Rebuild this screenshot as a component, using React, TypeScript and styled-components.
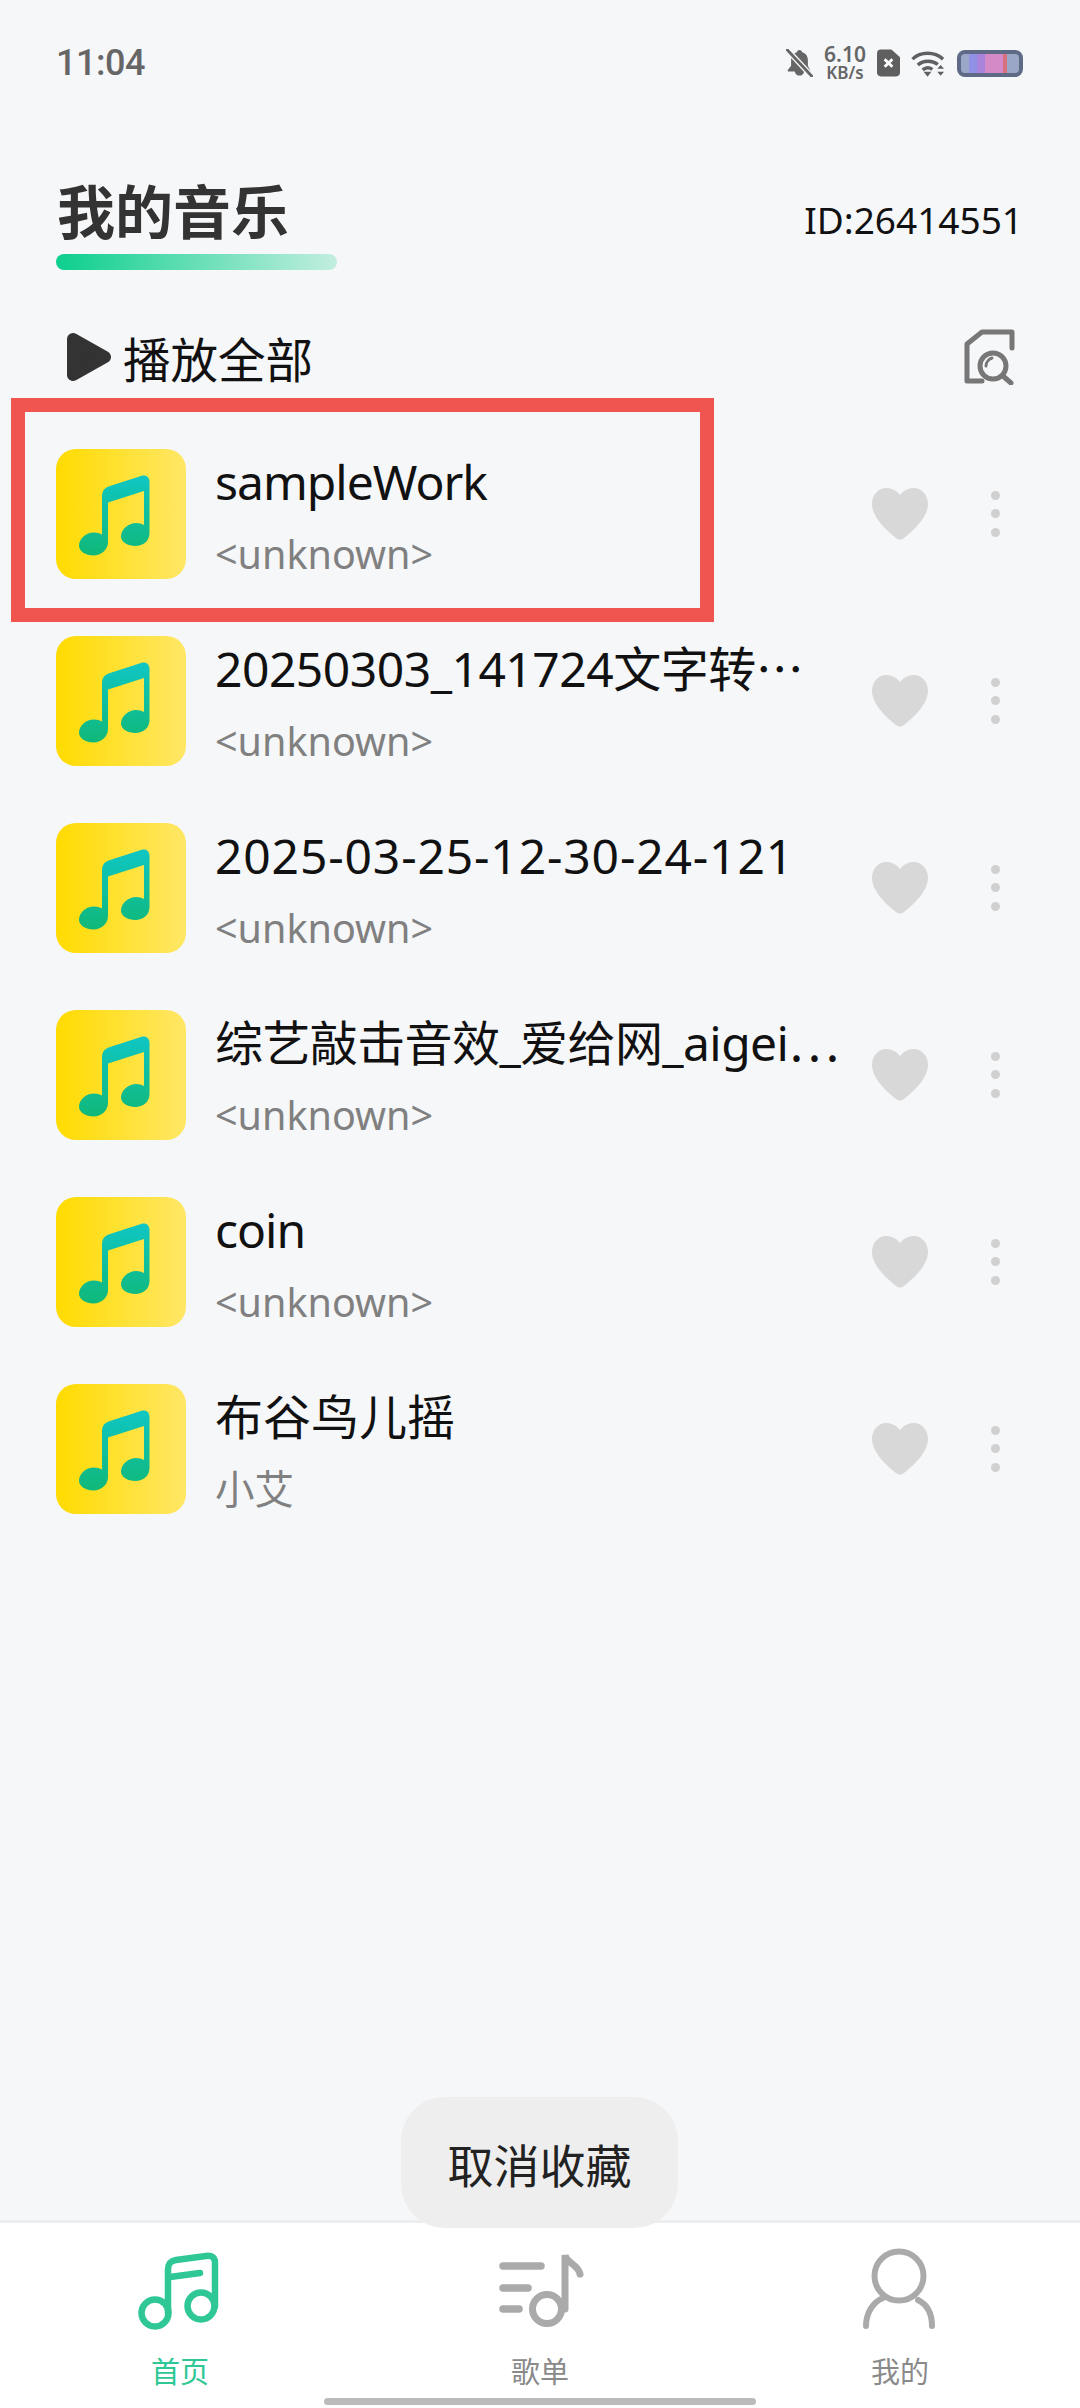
import React from 'react';

import styled, { createGlobalStyle } from 'styled-components';

const FONT = '"Noto Sans", "Noto Sans CJK SC", sans-serif';

type Song = { title: string; artist: string; tracking: number };

// tracking evens out the width difference between the phone's font and Noto Sans
const SONGS: Song[] = [
  { title: 'sampleWork', artist: '<unknown>', tracking: -1 },
  { title: '20250303_141724文字转⋯', artist: '<unknown>', tracking: -0.5 },
  { title: '2025-03-25-12-30-24-121', artist: '<unknown>', tracking: 0.85 },
  { title: '综艺敲击音效_爱给网_aigei⋯', artist: '<unknown>', tracking: -0.6 },
  { title: 'coin', artist: '<unknown>', tracking: -1 },
  { title: '布谷鸟儿摇', artist: '小艾', tracking: 0 },
];

const MutedBell = () => (
  <svg width="27" height="28" viewBox="0 0 28 30">
    <path
      d="M14 1c-1.600 0-2.600 1-2.800 2.400C6.800 4.600 5 8.200 5 12v6l-3.500 4.500c-.6.8-.1 1.500.8 1.500H9c.4 2.600 2.400 4.500 5 4.500s4.600-1.900 5-4.500h5.500c.9 0 1.400-.7.800-1.500L23 18v-6c0-3.800-1.800-7.400-6.200-8.600C16.600 2 15.600 1 14 1z"
      fill="#666"
    />
    <path d="M1 1l26 28" stroke="#f6f7f9" strokeWidth="6" />
    <path d="M1 1l26 28" stroke="#666" strokeWidth="3" strokeLinecap="round" />
  </svg>
);

const SimIcon = () => (
  <svg width="23" height="28" viewBox="0 0 24 28">
    <path
      d="M4 0h11l9 8v16c0 2.500-1.500 4-4 4H4c-2.500 0-4-1.500-4-4V4c0-2.500 1.500-4 4-4z"
      fill="#5f5f5f"
    />
    <path d="M8 10l8 8M16 10l-8 8" stroke="#fff" strokeWidth="3" />
  </svg>
);

const WifiIcon = () => (
  <svg width="35" height="27" viewBox="0 0 36 27">
    <g fill="none" stroke="#606060" strokeWidth="3.500">
      <path d="M1.500 9C10 1 24 1 33 9" />
      <path d="M7 15c6-5 15-5 20.500-.5" />
      <path d="M12 20c3-2.500 7-2.500 10-.5" />
    </g>
    <path d="M13 22h8l-4 5zM27 19l3.500-4 3.500 4zM27 22h7l-3.500 4z" fill="#606060" />
  </svg>
);

const PlayIcon = () => (
  <svg width="46" height="50" viewBox="0 0 46 50">
    <polygon
      points="7,7 39,25 7,43"
      fill="#333"
      stroke="#333"
      strokeWidth="12"
      strokeLinejoin="round"
    />
  </svg>
);

const SearchFileIcon = () => (
  <svg width="56" height="56" viewBox="0 0 56 56" fill="none">
    <g stroke="#777" strokeWidth="5" strokeLinecap="round" strokeLinejoin="round">
      <path d="M20 52H5V15L20 3h30v16" />
      <circle cx="31" cy="37" r="13" />
      <path d="M41 47l8 7" />
    </g>
    <path d="M24 37c0-4 3-7 6-8" stroke="#777" strokeWidth="3" strokeLinecap="round" />
  </svg>
);

const NoteTile = ({ id }: { id: number }) => (
  <svg width="130" height="130" viewBox="0 0 130 130">
    <defs>
      <linearGradient id={`note-${id}`} x1="0" y1="0" x2="0" y2="1">
        <stop offset="0" stopColor="#0fc6c4" />
        <stop offset="1" stopColor="#10b878" />
      </linearGradient>
    </defs>
    <path
      fill={`url(#note-${id})`}
      d="M46 48c0-6 2-9 8-11l31-10c5-1.500 8.500 1 8.500 6v51c0 8-6.500 13-14 13-8 0-14.500-4-14.500-9.500 0-7 7-13.500 15-13.500 3 0 6 .8 8 2V42L52 53.500V93c0 8-7 13.500-14.500 13.500C29.500 106.500 23 102 23 97c0-7.500 7-13.500 15-13.500 3 0 6 .8 8 2z"
    />
  </svg>
);

const HeartIcon = () => (
  <svg width="58" height="54" viewBox="0 0 58 54">
    <path
      d="M29 8C25 3 20 1 15.500 1 7 1 1 8 1 17c0 13 14 26 24 34 2.500 2 5.500 2 8 0 10-8 24-21 24-34C57 8 51 1 42.500 1 38 1 33 3 29 8z"
      fill="#d8d8d8"
    />
  </svg>
);

const HomeTabIcon = () => (
  <svg width="90" height="85" viewBox="0 0 90 85" fill="none">
    <g stroke="#2fc795" strokeWidth="6.500" strokeLinecap="round">
      <circle cx="20" cy="66" r="13.500" />
      <circle cx="66" cy="59" r="13.500" />
      <path d="M33 66V23c0-6 2-9 8-10l30-4c6-.8 9 1.500 9 7v43" />
      <path d="M35 30l30-4" />
    </g>
  </svg>
);

const PlaylistTabIcon = () => (
  <svg width="90" height="85" viewBox="0 0 90 85" fill="none">
    <g stroke="#aaa" strokeWidth="7" strokeLinecap="round">
      <path d="M8 19h38M8 41h25M8 62h16" strokeWidth="7.500" />
      <circle cx="52" cy="62" r="14.500" />
      <path d="M70 62V8c1 8 13 9 15 19" />
    </g>
  </svg>
);

const ProfileTabIcon = () => (
  <svg width="90" height="85" viewBox="0 0 90 85" fill="none">
    <g stroke="#aaa" strokeWidth="6" strokeLinecap="round">
      <circle cx="44" cy="29" r="24.500" />
      <path d="M11 79c0-13 7-24 17-28" />
      <path d="M63 53c10 5 14 15 14 26" />
    </g>
  </svg>
);

const App = () => (
  <StyledPage>
    <GlobalStyle />
    <StyledStatusBar>
      <StyledClock>11:04</StyledClock>
      <StyledStatusIcons>
        <MutedBell />
        <StyledSpeed>
          <StyledSpeedValue>6.10</StyledSpeedValue>
          <StyledSpeedUnit>KB/s</StyledSpeedUnit>
        </StyledSpeed>
        <SimIcon />
        <WifiIcon />
        <StyledBattery />
      </StyledStatusIcons>
    </StyledStatusBar>

    <StyledHeader>
      <StyledTitleBlock>
        <StyledTitle>我的音乐</StyledTitle>
        <StyledTitleBar />
      </StyledTitleBlock>
      <StyledUserId>ID:26414551</StyledUserId>
    </StyledHeader>

    <StyledPlayRow>
      <StyledPlayAll>
        <PlayIcon />
        <StyledPlayLabel>播放全部</StyledPlayLabel>
      </StyledPlayAll>
      <SearchFileIcon />
    </StyledPlayRow>

    <StyledList>
      {SONGS.map((song, index) => (
        <StyledRow key={song.title}>
          {index === 0 && <StyledHighlight />}
          <StyledTile>
            <NoteTile id={index} />
          </StyledTile>
          <StyledSongText>
            <StyledSongTitle $tracking={song.tracking}>{song.title}</StyledSongTitle>
            <StyledSongArtist>{song.artist}</StyledSongArtist>
          </StyledSongText>
          <StyledActions>
            <HeartIcon />
            <StyledMore>
              <StyledDot />
              <StyledDot />
              <StyledDot />
            </StyledMore>
          </StyledActions>
        </StyledRow>
      ))}
    </StyledList>

    <StyledTabBar>
      <StyledToast>取消收藏</StyledToast>
      <StyledTabs>
        <StyledTab>
          <HomeTabIcon />
          <StyledTabLabel $active>首页</StyledTabLabel>
        </StyledTab>
        <StyledTab>
          <PlaylistTabIcon />
          <StyledTabLabel>歌单</StyledTabLabel>
        </StyledTab>
        <StyledTab>
          <ProfileTabIcon />
          <StyledTabLabel>我的</StyledTabLabel>
        </StyledTab>
      </StyledTabs>
      <StyledHomeIndicator />
    </StyledTabBar>
  </StyledPage>
);

const GlobalStyle = createGlobalStyle`
  html, body {
    margin: 0;
    padding: 0;
    background: #f6f7f9;
  }
  * {
    box-sizing: border-box;
  }
`;

const StyledPage = styled.div`
  background: #f6f7f9;
  display: flex;
  flex-direction: column;
  font-family: ${FONT};
  height: 2408px;
  overflow: hidden;
  width: 1080px;
`;

const StyledStatusBar = styled.div`
  align-items: center;
  display: flex;
  flex-shrink: 0;
  height: 128px;
  justify-content: space-between;
  padding: 0 57px 2px 56px;
`;

const StyledClock = styled.span`
  color: #666;
  font-family: Roboto, sans-serif;
  font-size: 36px;
  font-weight: 500;
  letter-spacing: -0.5px;
`;

const StyledStatusIcons = styled.div`
  align-items: center;
  display: flex;
  gap: 11px;
`;

const StyledSpeed = styled.div`
  align-items: center;
  color: #666;
  display: flex;
  flex-direction: column;
  font-weight: 600;
  width: 42px;
`;

const StyledSpeedValue = styled.span`
  font-size: 21px;
  line-height: 20px;
`;

const StyledSpeedUnit = styled.span`
  font-size: 17px;
  line-height: 18px;
  white-space: nowrap;
`;

const StyledBattery = styled.div`
  background: linear-gradient(
    90deg,
    #9ba7c6 0 13%,
    #8f90e6 13% 28%,
    #a884dc 28% 42%,
    #d38ac6 42% 72%,
    #d8707f 72% 80%,
    #9ba7c6 80% 100%
  );
  border: 4px solid #5f6a86;
  border-radius: 8px;
  height: 27px;
  width: 66px;
`;

const StyledHeader = styled.div`
  align-items: flex-start;
  display: flex;
  flex-shrink: 0;
  height: 127px;
  justify-content: space-between;
  margin-top: 41px;
  padding: 0 57px 0 56px;
`;

const StyledTitleBlock = styled.div`
  display: flex;
  flex-direction: column;
  width: 281px;
`;

const StyledTitle = styled.div`
  color: #333;
  font-size: 58px;
  font-weight: 700;
  line-height: 86px;
  margin-bottom: -1px;
  padding-left: 1px;
`;

const StyledTitleBar = styled.div`
  background: linear-gradient(90deg, #0ccf8e, #c2eedf);
  border-radius: 8px;
  height: 16px;
`;

const StyledUserId = styled.div`
  color: #111;
  font-size: 37px;
  line-height: 50px;
  margin-top: 26px;
`;

const StyledPlayRow = styled.div`
  align-items: center;
  display: flex;
  flex-shrink: 0;
  height: 122px;
  justify-content: space-between;
  margin-bottom: 2px;
  padding: 0 62px 0 66px;
`;

const StyledPlayAll = styled.div`
  align-items: center;
  display: flex;
  gap: 11px;
`;

const StyledPlayLabel = styled.span`
  color: #111;
  font-size: 47.500px;
`;

const StyledList = styled.div`
  display: flex;
  flex: 1;
  flex-direction: column;
`;

const StyledRow = styled.div`
  align-items: center;
  display: flex;
  height: 187px;
  padding: 0 56px;
  position: relative;
`;

const StyledHighlight = styled.div`
  border: 14px solid #f0564f;
  height: 224px;
  left: 11px;
  position: absolute;
  top: -22px;
  width: 703px;
`;

const StyledTile = styled.div`
  background: linear-gradient(90deg, #ffdb00, #ffe766);
  border-radius: 20px;
  flex-shrink: 0;
  height: 130px;
  width: 130px;
`;

const StyledSongText = styled.div`
  display: flex;
  flex: 1;
  flex-direction: column;
  margin-left: 29px;
  min-width: 0;
  padding-top: 4px;
`;

const StyledSongTitle = styled.div<{ $tracking: number }>`
  color: #111;
  font-size: 48px;
  letter-spacing: ${({ $tracking }) => $tracking}px;
  line-height: 64px;
  white-space: nowrap;
`;

const StyledSongArtist = styled.div`
  color: #808080;
  font-size: 39.500px;
  line-height: 56px;
  margin-top: 12px;
`;

const StyledActions = styled.div`
  align-items: center;
  display: flex;
  flex-shrink: 0;
  gap: 62px;
  margin-right: 24px;
`;

const StyledMore = styled.div`
  display: flex;
  flex-direction: column;
  gap: 9.500px;
`;

const StyledDot = styled.div`
  background: #d0d0d0;
  border-radius: 50%;
  height: 9px;
  width: 9px;
`;

const StyledTabBar = styled.div`
  background: #fff;
  border-top: 3px solid #eceef0;
  flex-shrink: 0;
  height: 188px;
  position: relative;
`;

const StyledToast = styled.div`
  align-items: center;
  background: #eeeeee;
  border-radius: 44px;
  color: #222;
  display: flex;
  font-size: 46px;
  height: 131px;
  justify-content: center;
  left: 401px;
  position: absolute;
  top: -126px;
  width: 277px;
`;

const StyledTabs = styled.div`
  display: grid;
  grid-template-columns: repeat(3, 1fr);
  padding-top: 24px;
`;

const StyledTab = styled.div`
  align-items: center;
  display: flex;
  flex-direction: column;
`;

const StyledTabLabel = styled.span<{ $active?: boolean }>`
  color: ${({ $active }) => ($active ? '#2fc795' : '#8a8a8a')};
  font-size: 29px;
  line-height: 40px;
  margin-top: 20px;
`;

const StyledHomeIndicator = styled.div`
  background: #bbbbbb;
  border-radius: 4px;
  bottom: 3px;
  height: 7px;
  left: 324px;
  position: absolute;
  width: 432px;
`;

export default App;
